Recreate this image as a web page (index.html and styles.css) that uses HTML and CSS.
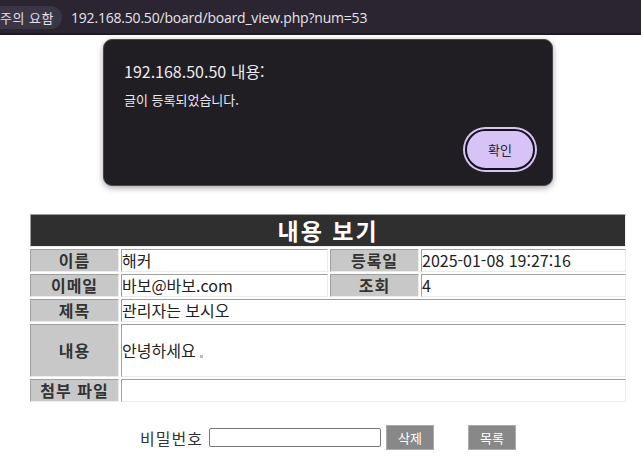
FILE: index.html
```html
<!DOCTYPE html>
<html lang="ko">
<head>
    <meta charset="UTF-8">
    <title>내용 보기</title>
    <link rel="stylesheet" href="styles.css">
</head>
<body>
    <div class="top-bar">
        <span class="warn-pill">주의 요함</span>
        <span class="url">192.168.50.50/board/board_view.php?num=53</span>
    </div>

    <div class="page">
        <table class="board">
            <colgroup>
                <col class="c-label">
                <col class="c-value">
                <col class="c-label">
                <col class="c-value2">
            </colgroup>
            <tr>
                <td class="title" colspan="4">내용 보기</td>
            </tr>
            <tr>
                <td class="label">이름</td>
                <td>해커</td>
                <td class="label">등록일</td>
                <td>2025-01-08 19:27:16</td>
            </tr>
            <tr>
                <td class="label">이메일</td>
                <td>바보@바보.com</td>
                <td class="label">조회</td>
                <td>4</td>
            </tr>
            <tr>
                <td class="label">제목</td>
                <td colspan="3">관리자는 보시오</td>
            </tr>
            <tr class="content-row">
                <td class="label">내용</td>
                <td colspan="3">안녕하세요 <span class="dot"></span></td>
            </tr>
            <tr>
                <td class="label">첨부 파일</td>
                <td colspan="3"></td>
            </tr>
        </table>

        <div class="actions">
            <label for="pw">비밀번호</label>
            <input type="password" id="pw">
            <button class="btn">삭제</button>
            <button class="btn btn-list">목록</button>
        </div>
    </div>

    <!-- alert() 창 -->
    <div class="alert">
        <div class="alert-title">192.168.50.50 내용:</div>
        <div class="alert-msg">글이 등록되었습니다.</div>
        <div class="alert-foot">
            <button class="ok">확인</button>
        </div>
    </div>
</body>
</html>
```

FILE: styles.css
```css
body {
    margin: 0;
    font-family: "Noto Sans CJK KR", "Noto Sans", sans-serif;
    background-color: #fff;
    color: #222;
}

.top-bar {
    height: 35px;
    background-color: #2a2530;
    border-bottom: 2px solid #1e1b22;
    display: flex;
    align-items: center;
    box-sizing: border-box;
    padding-top: 1px;
}

.warn-pill {
    background-color: #3b3645;
    color: #e2dfe6;
    font-size: 13px;
    line-height: 23px;
    height: 23px;
    padding: 0 8px 0 0;
    margin-left: -10px;
    padding-left: 10px;
    border-radius: 0 12px 12px 0;
    letter-spacing: 0.5px;
}

.url {
    color: #e6e3ea;
    font-size: 14px;
    margin-left: 9px;
    font-family: "Open Sans", "Noto Sans CJK KR", sans-serif;
    letter-spacing: -0.2px;
}

.page {
    padding-top: 177px;
}

.board {
    width: 600px;
    margin-left: 28px;
    border-spacing: 2px;
    table-layout: fixed;
}

.c-label {
    width: 89px;
}

.c-value {
    width: 207px;
}

.c-value2 {
    width: 205px;
}

.board td {
    border: 1px solid;
    border-color: #a0a0a0 #ececec #ececec #a0a0a0;
    padding: 0;
    height: 21px;
    font-size: 16px;
    line-height: 19px;
    color: #222;
    white-space: nowrap;
}

.board td.title {
    background-color: #2f2f2f;
    color: #fff;
    font-size: 23px;
    font-weight: bold;
    text-align: center;
    letter-spacing: 2px;
    height: 31px;
    line-height: 29px;
}

.board td.label {
    background-color: #c8c8c8;
    color: #333;
    font-weight: bold;
    text-align: center;
    letter-spacing: 1px;
}

.board .content-row td {
    height: 51px;
}

.dot {
    display: inline-block;
    width: 3px;
    height: 3px;
    background-color: #bbb;
    vertical-align: -1px;
}

.actions {
    width: 600px;
    margin-left: 28px;
    margin-top: 21px;
    display: flex;
    justify-content: center;
    align-items: center;
    font-size: 16px;
    color: #333;
}

.actions label {
    margin-right: 6px;
    letter-spacing: 1px;
}

.actions input {
    width: 172px;
    height: 19px;
    box-sizing: border-box;
    border: 1px solid #767676;
    border-radius: 2px;
    padding: 0 3px;
}

.btn {
    width: 48px;
    height: 25px;
    margin-left: 5px;
    background-color: #888;
    border: 1px solid #aaa;
    color: #fff;
    font-family: "Noto Sans CJK KR", sans-serif;
    font-size: 13px;
    padding: 0;
    cursor: pointer;
}

.btn-list {
    margin-left: 34px;
}

.alert {
    position: absolute;
    left: 103px;
    top: 39px;
    width: 450px;
    height: 147px;
    box-sizing: border-box;
    background-color: #201d23;
    border: 1px solid #4a4650;
    border-radius: 9px;
    box-shadow: 0 2px 6px rgba(0, 0, 0, 0.35);
    padding: 20px 16px 0 20px;
    color: #ece9f0;
}

.alert-title {
    font-size: 16px;
    line-height: 22px;
}

.alert-msg {
    font-size: 13px;
    line-height: 18px;
    margin-top: 9px;
}

.alert-foot {
    display: flex;
    justify-content: flex-end;
    margin-top: 20px;
}

.ok {
    width: 70px;
    height: 41px;
    border-radius: 21px;
    border: 2px solid #151218;
    background-color: #d8c3f6;
    box-shadow: 0 0 0 2px #d8c3f6;
    color: #2a2430;
    font-family: "Noto Sans CJK KR", sans-serif;
    font-size: 13px;
    margin-right: 1px;
    cursor: pointer;
}
```
